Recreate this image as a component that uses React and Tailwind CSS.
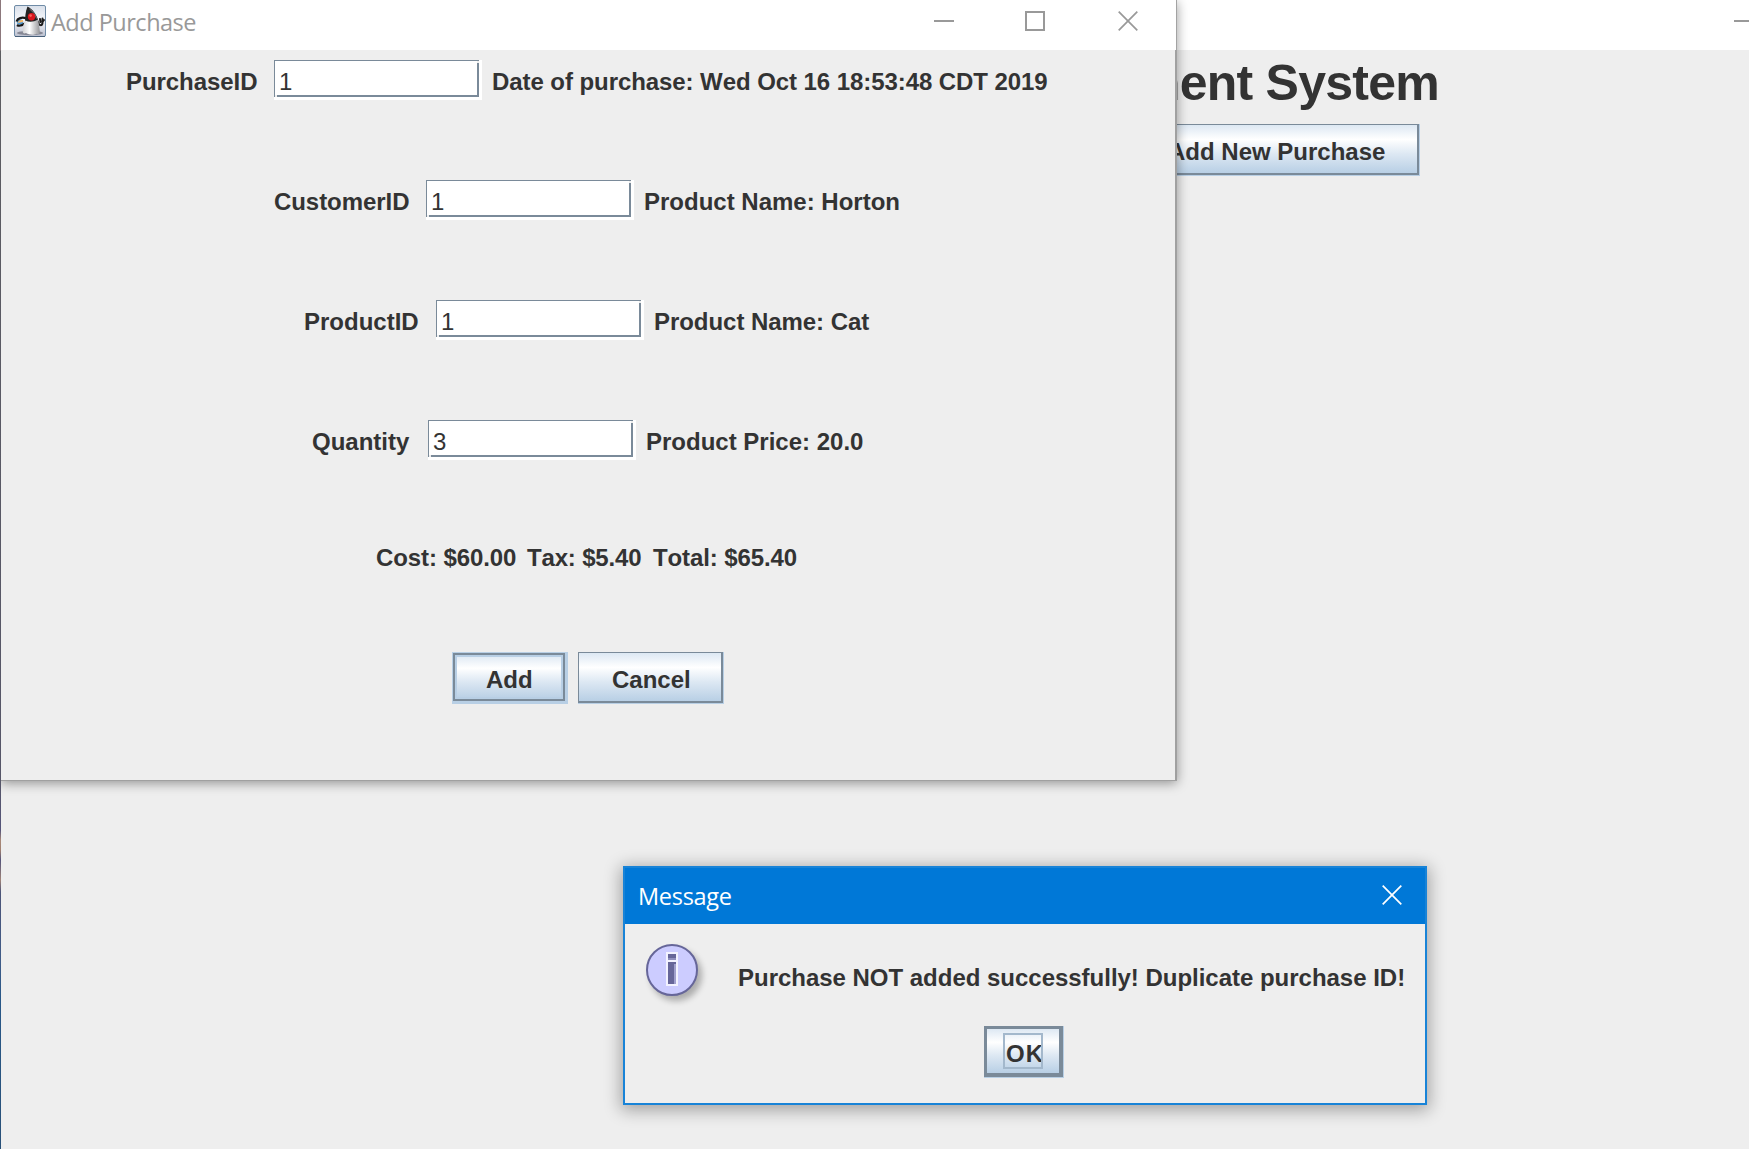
const LABEL =
  "font-['Liberation_Sans',Arial,sans-serif] text-[24px] leading-[27px] font-bold text-[#333333] whitespace-pre [font-kerning:none]";
const OCEAN =
  "bg-[linear-gradient(to_bottom,#dde8f3_0%,#ffffff_30%,#dde8f3_60%,#b8cfe5_100%)]";

const rows = [
  { pad: "pl-[126px]", labelWidth: "w-[148px] tracking-[-0.06px]", label: "PurchaseID", value: "1", note: "Date of purchase: Wed Oct 16 18:53:48 CDT 2019", noteStyle: "tracking-[-0.07px]" },
  { pad: "pl-[274px]", labelWidth: "w-[152px] tracking-[-0.06px]", label: "CustomerID", value: "1", note: "Product Name: Horton", noteStyle: "" },
  { pad: "pl-[304px]", labelWidth: "w-[132px]", label: "ProductID", value: "1", note: "Product Name: Cat", noteStyle: "tracking-[-0.05px]" },
  { pad: "pl-[312px]", labelWidth: "w-[116px]", label: "Quantity", value: "3", note: "Product Price: 20.0", noteStyle: "" },
];

function TextField({ value }) {
  return (
    <div className="h-[40px] w-[208px] shrink-0 bg-white">
      <div className="relative h-[37px] w-[205px] border-t border-r-2 border-b-2 border-l border-[#7a8a99] bg-white pt-[7px] pl-[4px] before:absolute before:top-0 before:-right-[2px] before:size-[2px] before:bg-[#eeeeee] after:absolute after:-bottom-[2px] after:left-0 after:size-[2px] after:bg-[#eeeeee]">
        <span className="block font-['Liberation_Sans',Arial,sans-serif] text-[24px] leading-[27px] text-[#333333]">
          {value}
        </span>
      </div>
    </div>
  );
}

function FieldRow({ row }) {
  return (
    <div className={`flex h-[120px] items-start ${row.pad}`}>
      <div className={`${LABEL} ${row.labelWidth} shrink-0 pt-[8px]`}>{row.label}</div>
      <TextField value={row.value} />
      <div className={`${LABEL} ${row.noteStyle} pt-[8px] pl-[10px]`}>{row.note}</div>
    </div>
  );
}

function OceanButton({ className, children }) {
  return (
    <div className={`h-[52px] shrink-0 border-r border-b border-[#b8cfe5] ${className}`}>
      <div className={`h-[51px] border-t border-r-2 border-b-2 border-l border-[#7a8a99] pt-[13px] ${OCEAN}`}>
        <div className={LABEL}>{children}</div>
      </div>
    </div>
  );
}

function DukeIcon() {
  return (
    <svg width="32" height="32" viewBox="0 0 32 32" className="shrink-0">
      <defs>
        <linearGradient id="tile" x1="0" y1="0" x2="0" y2="1">
          <stop offset="0" stopColor="#d9e0ea" />
          <stop offset="0.45" stopColor="#f5f6fa" />
          <stop offset="1" stopColor="#bcc0cf" />
        </linearGradient>
        <linearGradient id="belly" x1="0" y1="0" x2="1" y2="0">
          <stop offset="0" stopColor="#d2d2d4" />
          <stop offset="0.4" stopColor="#ffffff" />
          <stop offset="1" stopColor="#959598" />
        </linearGradient>
      </defs>
      <rect x="0.5" y="0.5" width="31" height="31" rx="1.5" fill="url(#tile)" stroke="#6f8ba6" />
      <path d="M1 31.500h30" stroke="#49617a" />
      <ellipse cx="16" cy="28" rx="13" ry="2.200" fill="#70727f" opacity="0.75" />
      <ellipse cx="6" cy="17" rx="3.200" ry="2.800" fill="#4f9bd6" />
      <path d="M3.500 18c1-2.500 3-3.500 5.500-3l0 2z" fill="#f5b96b" />
      <path d="M12 13.200C8 12 3.500 13 2.500 16.500M3 20c2 1.500 5 .5 8-1.500" fill="none" stroke="#151515" strokeWidth="2.200" />
      <path d="M24 17c1 4 4 4 4.500 1l0-4.500M26.500 17l-.5-3M28.500 17l1.500-2" fill="none" stroke="#1c1c1c" strokeWidth="2" strokeLinecap="round" />
      <path d="M13.500 1.500C18 4 22.500 9 24.500 16l-2 2.500-11.500-1c0-6 .5-11 2.500-16z" fill="#222222" />
      <path d="M15.500 4c3.500 2.500 6 6 7 9.500" fill="none" stroke="#777777" strokeWidth="1" />
      <path d="M11.500 15.500C9.500 18.500 8.500 22 8.800 26.500c0 2 1.500 2.500 3.200 1.500 3 2 8.500 2.200 10.500.7 2 .8 3.500.3 3.300-1.700C25.500 22 25 18 23.800 14.500 20 17 15 17.500 11.500 15.500z" fill="url(#belly)" />
      <circle cx="17.500" cy="11.800" r="3.700" fill="#d9161c" />
      <circle cx="16.600" cy="10.600" r="1.300" fill="#f5605c" />
    </svg>
  );
}

function InfoIcon() {
  return (
    <div className="flex size-[52px] shrink-0 justify-center rounded-full border-2 border-[#666699] bg-[#ccccff] pt-[6px] shadow-[4px_5px_6px_rgba(0,0,0,0.28)]">
      <svg width="12" height="34" viewBox="0 0 12 34" shapeRendering="crispEdges">
        <rect width="12" height="34" fill="#f2f2ff" />
        <rect x="2" y="2" width="8" height="6" fill="#666699" />
        <rect x="2" y="6" width="8" height="2" fill="#8f8fbd" />
        <rect x="2" y="10" width="8" height="22" fill="#666699" />
        <rect x="8" y="12" width="2" height="20" fill="#a0a0cc" />
      </svg>
    </div>
  );
}

function CloseGlyph({ color }) {
  return (
    <svg width="20" height="20" viewBox="0 0 20 20" fill="none" stroke={color} strokeWidth="1.7">
      <path d="M.7.7l18.600 18.600M19.300.7L.7 19.300" />
    </svg>
  );
}

function MainWindow() {
  return (
    <div className="flex h-full flex-1 flex-col bg-[#eeeeee]">
      <div className="flex h-[50px] shrink-0 justify-end bg-white pt-[20px]">
        <div className="h-[2px] w-[15px] bg-[#999999]" />
      </div>
      <div className="flex h-[74px] shrink-0 justify-end pt-[5px] pr-[310px]">
        <h1 className="font-['Liberation_Sans',Arial,sans-serif] text-[50px] leading-[56px] font-bold tracking-[-0.75px] whitespace-nowrap text-[#333333] [font-kerning:none]">
          ment System
        </h1>
      </div>
      <div className="flex justify-end pr-[329px]">
        <OceanButton className="w-[286px] [&_div_div]:pl-[33px]">Add New Purchase</OceanButton>
      </div>
    </div>
  );
}

function PurchaseWindow() {
  return (
    <div className="absolute top-0 left-px h-[781px] w-[1176px] shadow-[0_2px_11px_rgba(0,0,0,0.4)]">
      <div className="flex h-[50px] items-start border-r border-[#a3a3a3] bg-white pl-[13px]">
        <div className="pt-[5px]"><DukeIcon /></div>
        <div className="w-[888px] pt-[6px] pl-[5px] font-['Open_Sans','Noto_Sans',sans-serif] text-[23.5px] leading-[32px] tracking-[-0.5px] text-[#999999]">
          Add Purchase
        </div>
        <div className="mt-[20px] h-[2px] w-[20px] bg-[#999999]" />
        <div className="mt-[11px] ml-[71px] size-[20px] border-2 border-[#999999]" />
        <div className="mt-[11px] ml-[73px]"><CloseGlyph color="#999999" /></div>
      </div>
      <div className="-ml-px flex h-[731px] w-[1177px] flex-col border-r-2 border-b border-[#a0a0a0] bg-[#eeeeee] pt-[10px]">
        {rows.map((row) => (
          <FieldRow key={row.label} row={row} />
        ))}
        <div className="flex h-[112px] pt-[4px] pl-[376px]">
          <div className={`${LABEL} w-[151px] tracking-[-0.1px]`}>Cost: $60.00</div>
          <div className={`${LABEL} w-[126px] tracking-[-0.17px]`}>Tax: $5.40</div>
          <div className={`${LABEL} tracking-[-0.1px]`}>Total: $65.40</div>
        </div>
        <div className="flex gap-[10px] pl-[452px]">
          <div className="h-[52px] w-[116px] border-t border-r-[3px] border-b-[3px] border-l border-[#b8cfe5]">
            <div className={`h-[48px] border-2 border-[#7a8a99] ${OCEAN}`}>
              <div className="h-[44px] border-2 border-[#b8cfe5] pt-[9px] pl-[29px]">
                <div className={LABEL}>Add</div>
              </div>
            </div>
          </div>
          <OceanButton className="w-[146px] [&_div_div]:pl-[33px]">Cancel</OceanButton>
        </div>
      </div>
    </div>
  );
}

function MessageDialog() {
  return (
    <div className="absolute top-[866px] left-[623px] flex h-[239px] w-[804px] flex-col border-2 border-[#1883d7] bg-[#eeeeee] shadow-[0_3px_16px_2px_rgba(0,0,0,0.33)]">
      <div className="flex h-[56px] shrink-0 justify-between bg-[#0078d7] pr-[23px] pl-[13px]">
        <div className="pt-[12px] font-['Open_Sans','Noto_Sans',sans-serif] text-[23.5px] leading-[32px] tracking-[-0.3px] text-white">
          Message
        </div>
        <div className="pt-[17px]"><CloseGlyph color="#ffffff" /></div>
      </div>
      <div className="flex h-[102px] pt-[20px] pl-[21px]">
        <InfoIcon />
        <div className={`${LABEL} pt-[20px] pl-[40px] tracking-[-0.02px]`}>Purchase NOT added successfully! Duplicate purchase ID!</div>
      </div>
      <div className="ml-[359px] h-[52px] w-[80px] border-r border-b border-[#b8cfe5]">
        <div className={`h-[51px] border-t-[3px] border-r-[4px] border-b-[4px] border-l-[3px] border-[#7a8a99] pt-[4px] pl-[16px] ${OCEAN}`}>
          <div className="h-[36px] w-[40px] overflow-hidden border-2 border-[#a3b8cc] pt-[5px] pl-px">
            <div className={`${LABEL} tracking-[1px]`}>OK</div>
          </div>
        </div>
      </div>
    </div>
  );
}

export default function App() {
  return (
    <div className="relative flex h-[1149px] w-[1749px] overflow-hidden bg-[#eeeeee]">
      <MainWindow />
      <PurchaseWindow />
      <MessageDialog />
      <div className="absolute top-0 left-0 h-full w-px bg-[linear-gradient(to_bottom,#8c787c_0px,#8c787c_50px,#5c5c60_51px,#565668_780px,#54547a_830px,#a88878_840px,#a08070_850px,#54547a_860px,#a08478_880px,#4c5478_892px,#405c88_960px,#285888_1000px,#285078_1149px)]" />
    </div>
  );
}
